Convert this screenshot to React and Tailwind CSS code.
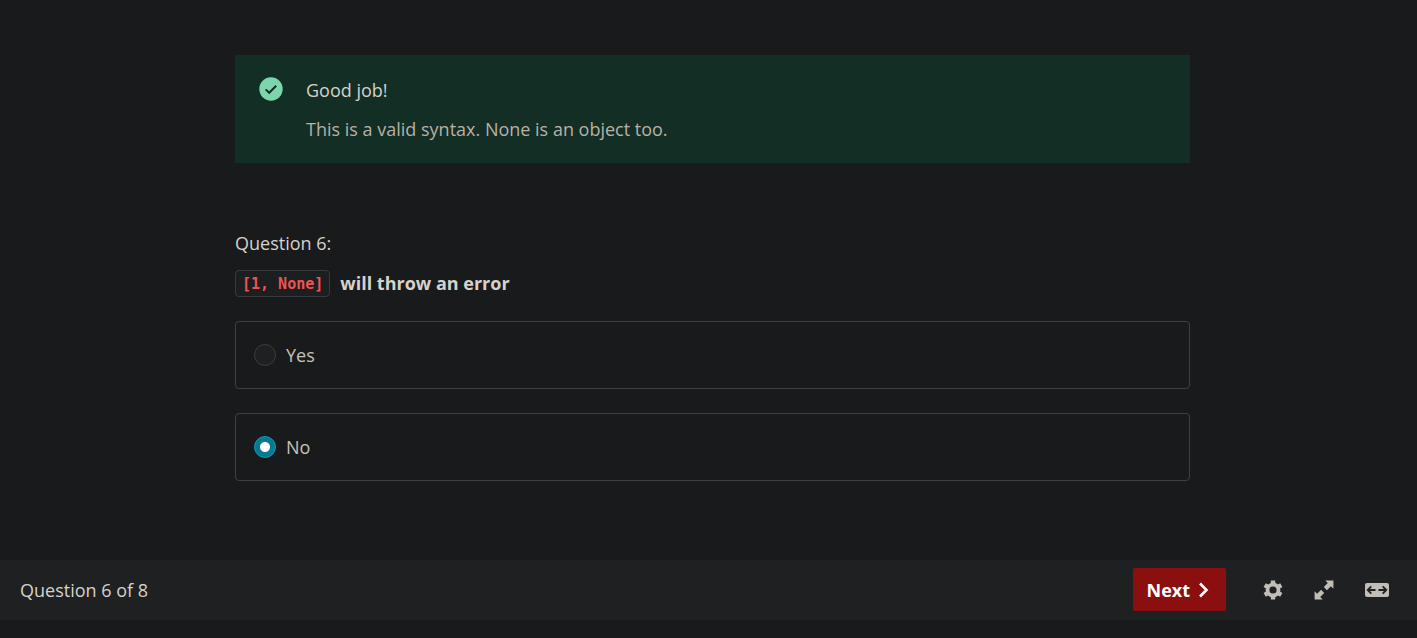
import React, { useState } from 'react';

function CheckIcon() {
  return (
    <svg viewBox="0 0 24 24" className="size-6 shrink-0" aria-hidden="true">
      <circle cx="12" cy="12" r="11.7" fill="#7bd6ae" />
      <path d="M6.7 12.4 10.2 15.800 17.2 8.800" fill="none" stroke="#132e24" strokeWidth="2" />
    </svg>
  );
}

function GearIcon() {
  return (
    <svg viewBox="0 0 20 20" className="size-5" fill="none" aria-hidden="true">
      <g stroke="currentColor" strokeWidth="4.4">
        <path d="M10 .6V5M10 15v4.400M1.700 5.200l4 2.300M14.300 12.500l4 2.300M18.300 5.200l-4 2.300M5.700 12.500l-4 2.300" />
        <circle cx="10" cy="10" r="5.500" strokeWidth="3.800" />
      </g>
    </svg>
  );
}

function ExpandIcon() {
  return (
    <svg viewBox="0 0 20 20" className="size-5" aria-hidden="true">
      <path d="M11.300 .6H19.400V8.700L16.900 6.200 12.900 10.200 9.800 7.100 13.800 3.100ZM8.700 19.400H.6V11.300L3.100 13.800 7.100 9.800 10.200 12.900 6.200 16.900Z" fill="currentColor" />
      <path d="m9 11 2-2" stroke="#1e2021" strokeWidth="3" />
    </svg>
  );
}

function WidthIcon() {
  return (
    <svg viewBox="0 0 24 14" className="h-3.5 w-6" aria-hidden="true">
      <rect width="24" height="14" rx="2" fill="currentColor" />
      <path d="M10.500 7H3.200M6.300 3.400 2.700 7l3.600 3.600M13.500 7h7.300M17.700 3.400 21.300 7l-3.600 3.600" fill="none" stroke="#1e2021" strokeWidth="1.800" />
    </svg>
  );
}

function Option({ label, checked, onSelect }) {
  return (
    <label className="flex cursor-pointer items-center gap-2.5 rounded border border-[#3d4042] px-[18px] py-5 leading-[26px] text-[#c6c1b8]">
      <input
        type="radio"
        name="answer"
        checked={checked}
        onChange={onSelect}
        className="size-[22px] shrink-0 appearance-none rounded-full border border-[#3a3d3f] bg-[#1f2022] checked:border-[#08a0bf] checked:bg-[radial-gradient(circle,#fff_4.5px,#087990_5.5px)]"
      />
      <span>{label}</span>
    </label>
  );
}

export default function App() {
  const [answer, setAnswer] = useState('No');

  return (
    <div className="flex min-h-screen flex-col bg-[#191a1c] font-['Segoe_UI','Open_Sans',sans-serif] text-lg text-[#d5d2cb]">
      <main className="grow pt-[55px] pl-2">
        <div className="mx-auto w-full max-w-[955px]">
          <section role="status" className="flex items-start gap-[23px] bg-[#132e24] px-6 pt-[22px] pb-5">
            <CheckIcon />
            <div className="flex flex-col gap-3 leading-[27px]">
              <p>Good job!</p>
              <p className="text-[#b7b1a6]">This is a valid syntax. None is an object too.</p>
            </div>
          </section>

          <section className="pt-[66px]">
            <p className="leading-7">Question 6:</p>
            <h1 className="mt-3 flex items-center gap-2.5 leading-7 font-bold">
              <code className="rounded border border-[#383b3d] bg-[#1c1e1f] px-1.5 pt-0.5 font-['DejaVu_Sans_Mono',monospace] text-[15px] leading-[23px] text-[#ee5353]">
                [1, None]
              </code>
              <span>will throw an error</span>
            </h1>
            <div role="radiogroup" aria-label="Answer" className="mt-6 flex flex-col gap-6">
              {['Yes', 'No'].map((label) => (
                <Option key={label} label={label} checked={answer === label} onSelect={() => setAnswer(label)} />
              ))}
            </div>
          </section>
        </div>
      </main>

      <footer className="mb-[18px] flex items-center justify-between bg-[#1e2021] pt-2 pr-7 pb-[9px] pl-5">
        <span>Question 6 of 8</span>
        <div className="flex items-center gap-[31px] text-[#c2beb7]">
          <button type="button" className="mr-1.5 flex h-[43px] items-center gap-1.5 rounded-xs bg-[#8b0f0f] pr-4 pl-3.5 font-bold text-white">
            Next
            <svg viewBox="0 0 14 18" className="h-[18px] w-3.5" aria-hidden="true">
              <path d="m4 2.500 6.500 6.500L4 15.500" fill="none" stroke="currentColor" strokeWidth="2.600" />
            </svg>
          </button>
          <button type="button" aria-label="Settings"><GearIcon /></button>
          <button type="button" aria-label="Full screen"><ExpandIcon /></button>
          <button type="button" aria-label="Expanded view"><WidthIcon /></button>
        </div>
      </footer>
    </div>
  );
}
